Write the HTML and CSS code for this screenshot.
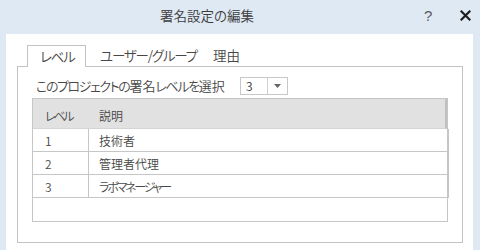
FILE: index.html
```html
<!DOCTYPE html>
<html lang="ja">
<head>
<meta charset="utf-8">
<link rel="stylesheet" href="styles.css">
</head>
<body>
<div class="window">
  <div class="titlebar">
    <div class="title">署名設定の編集</div>
    <div class="help">?</div>
    <div class="close">
      <svg width="11" height="11" viewBox="0 0 11 11"><path d="M1.5 1.5 L9.5 9.5 M9.5 1.5 L1.5 9.5" stroke="#1e1e1e" stroke-width="2.2" stroke-linecap="square"/></svg>
    </div>
  </div>
  <div class="panel">
    <div class="tabs">
      <div class="tab active"><span class="kana">レベル</span></div>
      <div class="tab t2"><span class="kana">ユーザー/グループ</span></div>
      <div class="tab t3">理由</div>
    </div>
    <div class="tabbox">
      <div class="selrow">
        <span class="sellabel"><span class="kana">このプロジェクトの</span>署名<span class="kana">レベルを</span>選択</span>
        <div class="combo">
          <span class="cval">3</span>
          <span class="carrow"><svg width="7" height="4" viewBox="0 0 7 4"><path d="M0 0 H7 L3.5 4 Z" fill="#666"/></svg></span>
        </div>
      </div>
      <div class="grid">
        <div class="row head">
          <div class="c1"><span class="kana">レベル</span></div>
          <div class="c2">説明</div>
        </div>
        <div class="rows">
          <div class="row"><div class="c1">1</div><div class="c2">技術者</div></div>
          <div class="row"><div class="c1">2</div><div class="c2">管理者代理</div></div>
          <div class="row"><div class="c1">3</div><div class="c2"><span class="kana">ラボマネージャー</span></div></div>
        </div>
      </div>
    </div>
  </div>
</div>
</body>
</html>
```
FILE: styles.css
```css
html, body {
  margin: 0;
  padding: 0;
}
body {
  width: 480px;
  height: 250px;
  overflow: hidden;
  background: #dfe9f4;
  font-family: "Noto Sans CJK JP", "Noto Sans", sans-serif;
  font-feature-settings: "palt";
  font-weight: 350;
  color: #474747;
}
.titlebar {
  height: 34px;
  display: flex;
  align-items: center;
}
.title {
  margin-left: 160px;
  font-size: 13.5px;
  color: #3c3c3c;
  width: 264px;
  line-height: 16px;
  margin-top: -5px;
}
.help {
  width: 22px;
  font-family: "Liberation Sans", sans-serif;
  font-size: 15px;
  font-weight: 400;
  color: #5a5a5a;
  margin-top: -4px;
}
.close {
  margin-left: 14px;
  margin-top: -4px;
  display: flex;
}
.panel {
  margin: 0 7px 0 6px;
  height: 216px;
  background: #fff;
  padding: 11px 0 0 11px;
  box-sizing: border-box;
}
.tabs {
  display: flex;
  padding-left: 10px;
  height: 21px;
  align-items: stretch;
}
.tab {
  font-size: 13.5px;
  line-height: 19px;
  box-sizing: border-box;
  white-space: nowrap;
}
.tab .kana {
  letter-spacing: -1.2px;
}
.tab.active {
  width: 59px;
  border: 1px solid #c3c3c3;
  border-bottom: none;
  background: #fff;
  padding-left: 12px;
  padding-top: 1px;
  height: 22px;
  position: relative;
  z-index: 1;
}
.tab.t2 {
  padding-left: 14px;
  width: 127px;
  padding-top: 1px;
}
.tab.t3 {
  padding-top: 1px;
}
.tabbox {
  width: 446px;
  height: 177px;
  border: 1px solid #c3c3c3;
  box-sizing: border-box;
  padding: 9px 0 0 14px;
}
.selrow {
  display: flex;
  align-items: center;
  height: 19px;
}
.sellabel {
  font-size: 13px;
  padding-left: 4px;
  width: 204px;
  white-space: nowrap;
}
.sellabel .kana {
  letter-spacing: -1.4px;
}
.combo {
  width: 48px;
  height: 18px;
  border: 1px solid #c8c8c8;
  box-sizing: border-box;
  display: flex;
  font-size: 12px;
  color: #333;
}
.cval {
  width: 27px;
  border-right: 1px solid #d0d0d0;
  padding-left: 5px;
  line-height: 16px;
  box-sizing: border-box;
}
.carrow {
  flex: 1;
  display: flex;
  align-items: center;
  justify-content: center;
}
.grid {
  margin-top: 3px;
  width: 416px;
  height: 124px;
  border: 1px solid #c6c6c6;
  box-sizing: border-box;
  font-size: 12px;
}
.grid .kana {
  letter-spacing: -2.2px;
}
.row {
  display: flex;
  height: 23px;
  border-bottom: 1px solid #c6c6c6;
  box-sizing: border-box;
  align-items: center;
}
.row.head {
  height: 30px;
  background: #e1e1e1;
  border-bottom: 1px solid #d4d4d4;
  align-items: flex-start;
  padding-top: 8px;
  border-right: 2px solid #c0c0c0;
}
.rows {
  border-right: 2px solid #c6c6c6;
  width: 414px;
}
.c1 {
  width: 56px;
  padding-left: 12px;
  box-sizing: border-box;
  align-self: stretch;
  display: flex;
  align-items: center;
  border-right: 1px solid #c6c6c6;
}
.row.head .c1 {
  border-right: none;
  align-self: auto;
}
.c2 {
  padding-left: 10px;
}
```
